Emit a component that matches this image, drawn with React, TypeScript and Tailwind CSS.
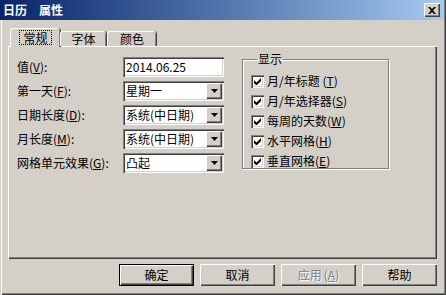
import React from 'react';

const raised =
  'bg-[#d4d0c8] shadow-[inset_1px_1px_0_#ffffff,inset_-1px_-1px_0_#404040,inset_-2px_-2px_0_#808080]';
const sunken =
  'bg-white shadow-[inset_1px_1px_0_#808080,inset_2px_2px_0_#404040,inset_-1px_-1px_0_#ffffff,inset_-2px_-2px_0_#d4d0c8]';

const Key = ({ k }: { k: string }) => <span className="underline">{k}</span>;

const fields = [
  { label: '值', key: 'V', value: '2014.06.25', combo: false },
  { label: '第一天', key: 'F', value: '星期一', combo: true },
  { label: '日期长度', key: 'D', value: '系统(中日期)', combo: true },
  { label: '月长度', key: 'M', value: '系统(中日期)', combo: true },
  { label: '网格单元效果', key: 'G', value: '凸起', combo: true },
];

const checks = [
  { label: '月/年标题 ', key: 'T' },
  { label: '月/年选择器', key: 'S' },
  { label: '每周的天数', key: 'W' },
  { label: '水平网格', key: 'H' },
  { label: '垂直网格', key: 'E' },
];

const Field = ({ value, combo }: { value: string; combo: boolean }) => (
  <div className={`w-[101px] h-[20px] flex items-center pl-[3px] pr-[2px] ${sunken}`}>
    <span className="flex-1 leading-none">{value}</span>
    {combo && (
      <div className={`w-[16px] h-[16px] flex items-center justify-center ${raised}`}>
        <svg width="7" height="4" viewBox="0 0 7 4">
          <path d="M0 0h7L3.5 4z" fill="#000" />
        </svg>
      </div>
    )}
  </div>
);

const CheckBox = () => (
  <div className={`w-[13px] h-[13px] flex items-center justify-center ${sunken}`}>
    <svg width="7" height="7" viewBox="0 0 7 7">
      <path d="M0 2v3l2 2h1l4-4V0L2.5 4.5z" fill="#000" />
    </svg>
  </div>
);

const Button = ({ label, k, isDefault, disabled }: { label: string; k?: string; isDefault?: boolean; disabled?: boolean }) => (
  <div
    className={`w-[75px] h-[22px] flex items-center justify-center ${raised} ${
      isDefault ? 'outline outline-1 outline-black -outline-offset-1 shadow-[inset_2px_2px_0_#ffffff,inset_-2px_-2px_0_#404040,inset_-3px_-3px_0_#808080]' : ''
    } ${disabled ? 'text-[#808080] [text-shadow:1px_1px_0_#ffffff]' : ''}`}
  >
    {label}
    {k && (
      <span className="ml-[2px]">
        (<Key k={k} />)
      </span>
    )}
  </div>
);

export default function App() {
  return (
    <div className="w-[446px] h-[295px] bg-[#d4d0c8] flex flex-col text-[12px] text-black font-['Noto_Sans_CJK_SC',sans-serif] shadow-[inset_1px_0_0_#d4d0c8,inset_2px_0_0_#ffffff,inset_-1px_-1px_0_#404040,inset_-2px_-2px_0_#808080]">
      {/* title bar */}
      <div className="h-[20px] mr-[2px] flex items-center pl-[3px] pr-[4px] bg-gradient-to-r from-[#0a246a] to-[#a6caf0]">
        <span className="flex-1 text-white font-bold leading-none">日历　属性</span>
        <div className={`w-[16px] h-[14px] flex items-center justify-center ${raised}`}>
          <svg width="8" height="7" viewBox="0 0 8 7">
            <path d="M0 0h2l2 2 2-2h2L5 3.5 8 7H6L4 5 2 7H0l3-3.5z" fill="#000" />
          </svg>
        </div>
      </div>

      <div className="pl-[8px] pr-[9px] pt-[8px]">
        {/* tabs */}
        <div className="flex items-end h-[18px] pl-[2px] relative z-10">
          <div className="w-[50px] h-[19px] -mb-[1px] bg-[#d4d0c8] rounded-t-[3px] border-t border-l border-white shadow-[inset_-1px_0_0_#808080,1px_0_0_#404040] flex items-start justify-center pt-[1px]">
            <span className="px-[3px] border border-dotted border-black leading-[13px]">常规</span>
          </div>
          <div className="w-[46px] h-[15px] rounded-t-[3px] border-t border-l border-white shadow-[inset_-1px_0_0_#808080,1px_0_0_#404040] flex items-center justify-center leading-none">
            字体
          </div>
          <div className="w-[49px] h-[15px] ml-[1px] rounded-t-[3px] border-t border-l border-white shadow-[inset_-1px_0_0_#808080,1px_0_0_#404040] flex items-center justify-center leading-none">
            颜色
          </div>
        </div>

        {/* page */}
        <div className="w-[429px] h-[213px] border-t border-l border-white shadow-[inset_-1px_-1px_0_#404040,inset_-2px_-2px_0_#808080] flex">
          <div className="flex flex-col gap-[4px] pt-[10px] pl-[8px]">
            {fields.map((f) => (
              <div key={f.key} className="flex items-center h-[20px]">
                <span className="w-[106px] leading-none">
                  {f.label}(<Key k={f.key} />):
                </span>
                <Field value={f.value} combo={f.combo} />
              </div>
            ))}
          </div>

          <fieldset className="ml-[18px] mt-[5px] w-[147px] h-[117px] border border-[#808080] shadow-[inset_1px_1px_0_#ffffff,1px_1px_0_#ffffff] pl-[8px] pt-[5px]">
            <legend className="px-[1px] ml-[6px] leading-[14px]">显示</legend>
            {checks.map((c) => (
              <div key={c.key} className="flex items-center h-[20px]">
                <CheckBox />
                <span className="ml-[3px] leading-none whitespace-pre">
                  {c.label}(<Key k={c.key} />)
                </span>
              </div>
            ))}
          </fieldset>
        </div>
      </div>

      {/* buttons */}
      <div className="flex gap-[6px] pl-[119px] pt-[5px]">
        <Button label="确定" isDefault />
        <Button label="取消" />
        <Button label="应用" k="A" disabled />
        <Button label="帮助" />
      </div>
    </div>
  );
}
